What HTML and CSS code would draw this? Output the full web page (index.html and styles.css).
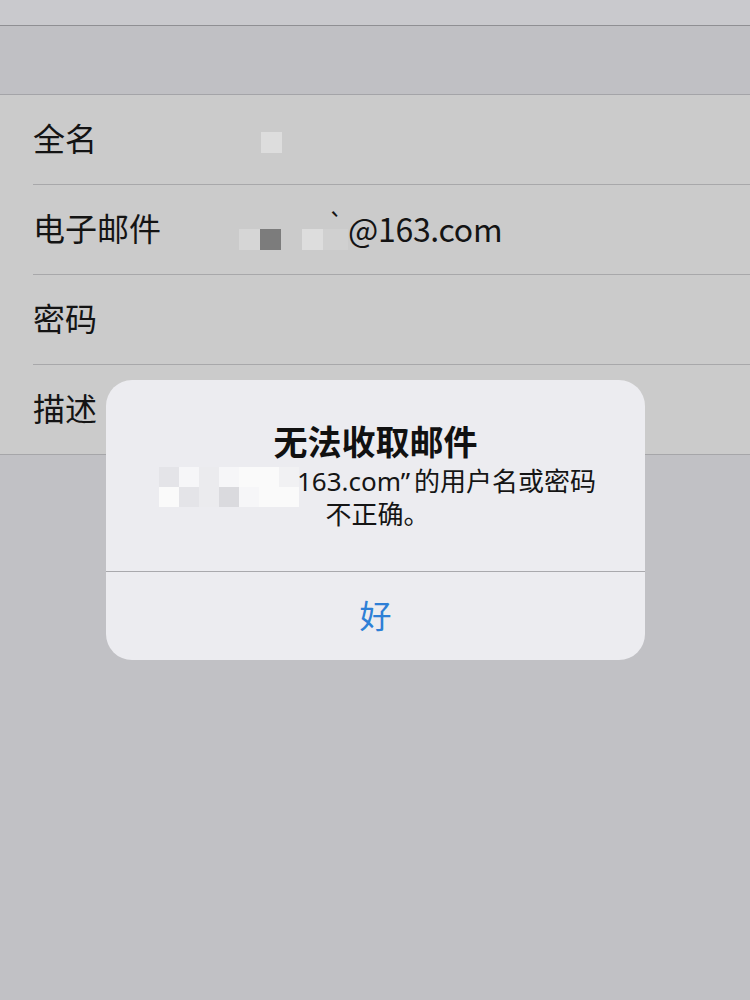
FILE: index.html
```html
<!DOCTYPE html>
<html lang="zh-CN">
<head>
    <meta charset="UTF-8">
    <meta name="viewport" content="width=device-width, initial-scale=1.0">
    <title>账户</title>
    <link rel="stylesheet" href="styles.css">
</head>
<body>
    <div class="screen">
        <div class="status-bar"></div>
        <div class="section-gap"></div>

        <div class="form-list">
            <div class="form-row">
                <div class="row-inner">
                    <span class="row-label">全名</span>
                    <span class="row-value">
                        <span class="mosaic mosaic-name"><i class="cell c-light"></i></span>
                    </span>
                </div>
            </div>
            <div class="form-row">
                <div class="row-inner">
                    <span class="row-label">电子邮件</span>
                    <span class="row-value">
                        <span class="mosaic mosaic-mail">
                            <i class="cell c-pale"></i><i class="cell c-dark"></i><i class="cell c-bg"></i><i class="cell c-light"></i><i class="cell c-mid"></i>
                        </span><span class="grave">`</span><span class="mail-text">@163.com</span>
                    </span>
                </div>
            </div>
            <div class="form-row">
                <div class="row-inner">
                    <span class="row-label">密码</span>
                </div>
            </div>
            <div class="form-row last">
                <div class="row-inner">
                    <span class="row-label">描述</span>
                </div>
            </div>
        </div>

        <!-- 提示框 -->
        <div class="alert">
            <div class="alert-body">
                <div class="alert-title">无法收取邮件</div>
                <div class="alert-message">
                    <span class="mosaic-anchor"><span class="mosaic-grid">
                        <i class="m1"></i><i class="m2"></i><i class="m3"></i><i class="m2"></i><i class="m4"></i><i class="m4"></i><i class="m5"></i>
                        <i class="m4"></i><i class="m1"></i><i class="m3"></i><i class="m6"></i><i class="m2"></i><i class="m4"></i><i class="m4"></i>
                    </span></span><span class="latin">163.com”</span>的用户名或密码<br>不正确。
                </div>
            </div>
            <div class="alert-actions">
                <button class="alert-btn">好</button>
            </div>
        </div>
    </div>
</body>
</html>
```

FILE: styles.css
```css
body {
    margin: 0;
    padding: 0;
    font-family: "Noto Sans CJK SC", "Noto Sans", sans-serif;
    background-color: #c0c0c4;
    color: #111;
}

.screen {
    position: relative;
    width: 750px;
    height: 1000px;
    overflow: hidden;
    background-color: #c1c1c5;
}

.status-bar {
    height: 25px;
    background-color: #c9c9cd;
    border-bottom: 1px solid #8f8f93;
}

.section-gap {
    height: 68px;
    background-color: #c0c0c4;
    border-bottom: 1px solid #a4a4a8;
}

.form-list {
    background-color: #cbcbcb;
    border-bottom: 1px solid #a6a6a9;
}

.form-row {
    padding-left: 33px;
}

.row-inner {
    height: 89px;
    display: flex;
    align-items: center;
    border-bottom: 1px solid #a8a8aa;
}

.form-row.last .row-inner {
    border-bottom: none;
}

.row-label {
    width: 206px;
    font-size: 32px;
    line-height: 1;
    color: #141414;
    margin-top: -6px;
}

.row-value {
    display: flex;
    align-items: center;
    font-size: 32px;
    color: #141414;
}

.mosaic {
    display: flex;
}

.cell {
    display: block;
    width: 21px;
    height: 21px;
}

.mosaic-name {
    margin-left: 22px;
    margin-top: 6px;
}

.mosaic-mail {
    margin-top: 20px;
}

.c-pale { background-color: #d6d6d6; }
.c-dark { background-color: #7c7c7c; }
.c-bg { background-color: #cbcbcb; }
.c-light { background-color: #dddddd; }
.c-mid { background-color: #d0d0d0; width: 25px; }

.grave {
    margin-left: -20px;
    margin-top: -14px;
    font-size: 26px;
    width: 20px;
}

.mail-text {
    margin-top: -4px;
    letter-spacing: -0.3px;
}

/* alert */
.alert {
    position: absolute;
    top: 380px;
    left: 106px;
    width: 539px;
    height: 280px;
    border-radius: 26px;
    background-color: #ececf0;
    overflow: hidden;
    display: flex;
    flex-direction: column;
}

.alert-body {
    height: 192px;
    border-bottom: 1px solid #a9a9ad;
    text-align: center;
    box-sizing: border-box;
    padding-top: 41px;
}

.alert-title {
    font-size: 34px;
    font-weight: bold;
    line-height: 40px;
    color: #111;
}

.alert-message {
    margin-top: 3px;
    font-size: 26px;
    line-height: 32px;
    color: #151515;
    padding-left: 4px;
}

.latin {
    font-family: "Noto Sans", sans-serif;
    margin-right: 4px;
}

.mosaic-anchor {
    position: relative;
    display: inline-block;
    width: 138px;
    height: 20px;
}

.mosaic-grid {
    position: absolute;
    left: 0;
    top: -4px;
    width: 140px;
    display: grid;
    grid-template-columns: repeat(7, 20px);
    grid-auto-rows: 20px;
}

.mosaic-grid i { display: block; }
.m1 { background-color: #e4e4e8; }
.m2 { background-color: #f6f6f8; }
.m3 { background-color: #ebebee; }
.m4 { background-color: #fafafa; }
.m5 { background-color: #f1f1f3; }
.m6 { background-color: #dadade; }

.alert-actions {
    flex: 1;
    display: flex;
}

.alert-btn {
    flex: 1;
    background: none;
    border: none;
    font-family: inherit;
    font-size: 32px;
    color: #2e7fd6;
    padding: 0;
    padding-bottom: 4px;
    cursor: pointer;
}
```
